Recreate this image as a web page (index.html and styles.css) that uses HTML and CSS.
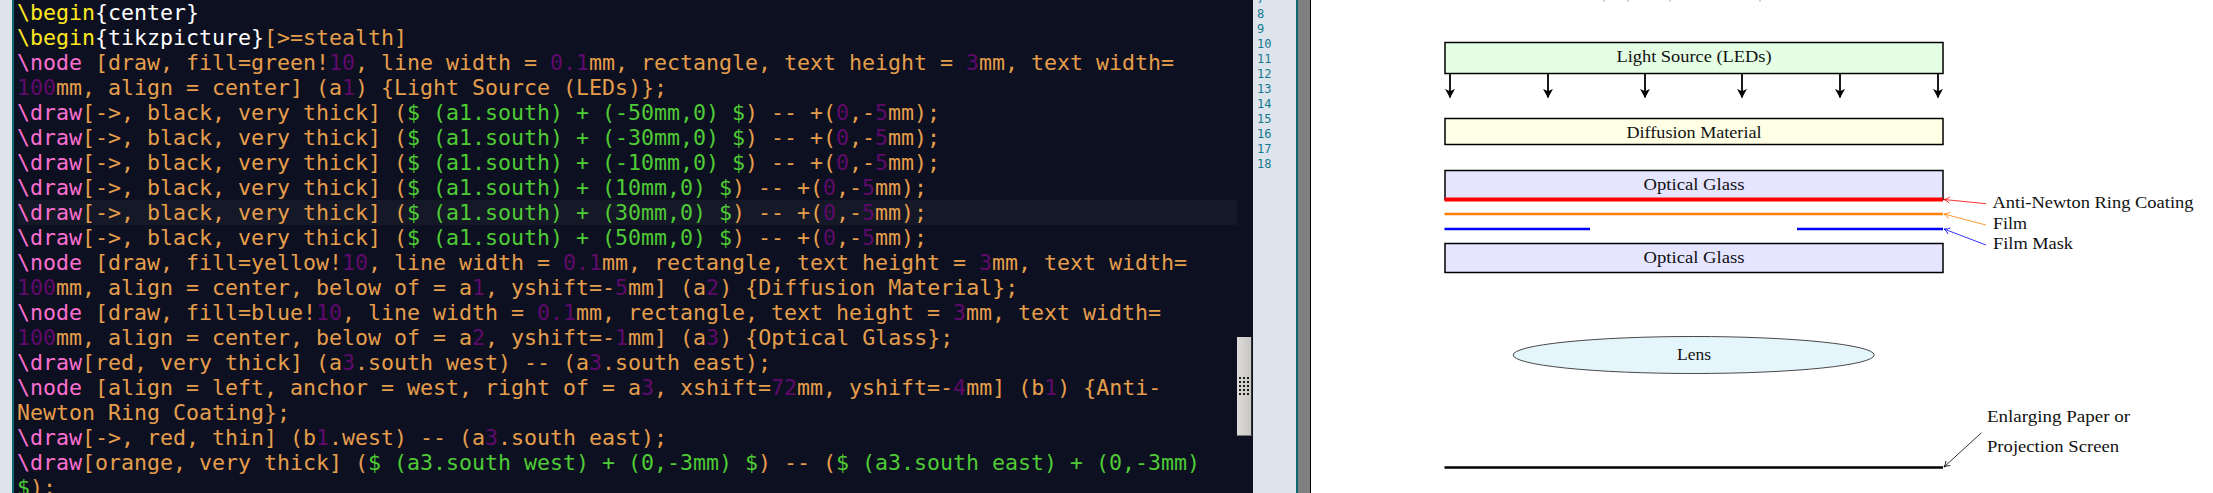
FILE: index.html
```html
<!DOCTYPE html>
<html lang="en">
<head>
<meta charset="utf-8">
<title>TikZ editor and preview</title>
<link rel="stylesheet" href="styles.css">
</head>
<body>
<div class="app">
  <div class="gutter"></div>
  <main class="editor">
    <div class="code">
      <div class="line"><span class="y">\begin</span><span class="w">{center}</span></div>
      <div class="line"><span class="y">\begin</span><span class="w">{tikzpicture}</span>[&gt;=stealth]</div>
      <div class="line"><span class="k">\node</span> [draw, fill=green!<span class="n">10</span>, line width = <span class="n">0.1</span>mm, rectangle, text height = <span class="n">3</span>mm, text width=</div>
      <div class="line"><span class="n">100</span>mm, align = center] (a<span class="n">1</span>) {Light Source (LEDs)};</div>
      <div class="line"><span class="k">\draw</span>[-&gt;, black, very thick] (<span class="g">$ (a1.south) + (-50mm,0) $</span>) -- +(<span class="n">0</span>,-<span class="n">5</span>mm);</div>
      <div class="line"><span class="k">\draw</span>[-&gt;, black, very thick] (<span class="g">$ (a1.south) + (-30mm,0) $</span>) -- +(<span class="n">0</span>,-<span class="n">5</span>mm);</div>
      <div class="line"><span class="k">\draw</span>[-&gt;, black, very thick] (<span class="g">$ (a1.south) + (-10mm,0) $</span>) -- +(<span class="n">0</span>,-<span class="n">5</span>mm);</div>
      <div class="line"><span class="k">\draw</span>[-&gt;, black, very thick] (<span class="g">$ (a1.south) + (10mm,0) $</span>) -- +(<span class="n">0</span>,-<span class="n">5</span>mm);</div>
      <div class="line current"><span class="k">\draw</span>[-&gt;, black, very thick] (<span class="g">$ (a1.south) + (30mm,0) $</span>) -- +(<span class="n">0</span>,-<span class="n">5</span>mm);</div>
      <div class="line"><span class="k">\draw</span>[-&gt;, black, very thick] (<span class="g">$ (a1.south) + (50mm,0) $</span>) -- +(<span class="n">0</span>,-<span class="n">5</span>mm);</div>
      <div class="line"><span class="k">\node</span> [draw, fill=yellow!<span class="n">10</span>, line width = <span class="n">0.1</span>mm, rectangle, text height = <span class="n">3</span>mm, text width=</div>
      <div class="line"><span class="n">100</span>mm, align = center, below of = a<span class="n">1</span>, yshift=-<span class="n">5</span>mm] (a<span class="n">2</span>) {Diffusion Material};</div>
      <div class="line"><span class="k">\node</span> [draw, fill=blue!<span class="n">10</span>, line width = <span class="n">0.1</span>mm, rectangle, text height = <span class="n">3</span>mm, text width=</div>
      <div class="line"><span class="n">100</span>mm, align = center, below of = a<span class="n">2</span>, yshift=-<span class="n">1</span>mm] (a<span class="n">3</span>) {Optical Glass};</div>
      <div class="line"><span class="k">\draw</span>[red, very thick] (a<span class="n">3</span>.south west) -- (a<span class="n">3</span>.south east);</div>
      <div class="line"><span class="k">\node</span> [align = left, anchor = west, right of = a<span class="n">3</span>, xshift=<span class="n">72</span>mm, yshift=-<span class="n">4</span>mm] (b<span class="n">1</span>) {Anti-</div>
      <div class="line">Newton Ring Coating};</div>
      <div class="line"><span class="k">\draw</span>[-&gt;, red, thin] (b<span class="n">1</span>.west) -- (a<span class="n">3</span>.south east);</div>
      <div class="line"><span class="k">\draw</span>[orange, very thick] (<span class="g">$ (a3.south west) + (0,-3mm) $</span>) -- (<span class="g">$ (a3.south east) + (0,-3mm)</span></div>
      <div class="line"><span class="g">$</span>);</div>
    </div>
    <div class="scrollbar">
      <div class="thumb">
        <div class="grip">
          <i></i><i></i><i></i><i></i><i></i><i></i><i></i><i></i><i></i><i></i><i></i><i></i><i></i><i></i><i></i>
        </div>
      </div>
    </div>
  </main>
  <aside class="numbers">
    <div>7</div><div>8</div><div>9</div><div>10</div><div>11</div><div>12</div><div>13</div><div>14</div><div>15</div><div>16</div><div>17</div><div>18</div>
  </aside>
  <div class="divider"></div>
  <section class="preview">
    <svg class="figure" width="902" height="493" viewBox="1311 0 902 493" xmlns="http://www.w3.org/2000/svg">
      <defs>
        <marker id="head" viewBox="0 0 10 10" refX="9.5" refY="5" markerWidth="9" markerHeight="11" markerUnits="userSpaceOnUse" orient="auto" preserveAspectRatio="none">
          <path class="head" d="M0 0.5 L10 5 L0 9.5 L2.6 5 Z"/>
        </marker>
        <marker id="red" viewBox="0 0 10 10" refX="9" refY="5" markerWidth="8" markerHeight="8" markerUnits="userSpaceOnUse" orient="auto">
          <path class="open red" d="M2 1 Q5 4 9 5 Q5 6 2 9"/>
        </marker>
        <marker id="orange" viewBox="0 0 10 10" refX="9" refY="5" markerWidth="8" markerHeight="8" markerUnits="userSpaceOnUse" orient="auto">
          <path class="open orange" d="M2 1 Q5 4 9 5 Q5 6 2 9"/>
        </marker>
        <marker id="blue" viewBox="0 0 10 10" refX="9" refY="5" markerWidth="8" markerHeight="8" markerUnits="userSpaceOnUse" orient="auto">
          <path class="open blue" d="M2 1 Q5 4 9 5 Q5 6 2 9"/>
        </marker>
        <marker id="black" viewBox="0 0 10 10" refX="9" refY="5" markerWidth="8" markerHeight="8" markerUnits="userSpaceOnUse" orient="auto">
          <path class="open dark" d="M2 1 Q5 4 9 5 Q5 6 2 9"/>
        </marker>
      </defs>

      <path class="clip" d="M1604 0v1.5M1628 0v1.5M1670 0v1.5M1760 0v1.5"/>

      <rect class="box green" x="1445" y="42.5" width="498" height="31"/>
      <text class="label" x="1694" y="62" text-anchor="middle" textLength="155" lengthAdjust="spacingAndGlyphs">Light Source (LEDs)</text>

      <path class="drop" marker-end="url(#head)" d="M1450 74V97.500"/>
      <path class="drop" marker-end="url(#head)" d="M1548 74V97.500"/>
      <path class="drop" marker-end="url(#head)" d="M1645 74V97.500"/>
      <path class="drop" marker-end="url(#head)" d="M1742 74V97.500"/>
      <path class="drop" marker-end="url(#head)" d="M1840 74V97.500"/>
      <path class="drop" marker-end="url(#head)" d="M1938 74V97.500"/>

      <rect class="box yellow" x="1445" y="118.5" width="498" height="26"/>
      <text class="label" x="1694" y="138" text-anchor="middle" textLength="135" lengthAdjust="spacingAndGlyphs">Diffusion Material</text>

      <rect class="box blue-fill" x="1445" y="170.5" width="498" height="29"/>
      <text class="label" x="1694" y="190" text-anchor="middle" textLength="101" lengthAdjust="spacingAndGlyphs">Optical Glass</text>

      <path class="bar red" d="M1444.500 199.500H1943"/>
      <path class="bar-thin orange" d="M1444.500 214H1943"/>
      <path class="bar-thin blue" d="M1444.500 229H1590M1797 229H1943"/>

      <rect class="box blue-fill" x="1445" y="243.500" width="498" height="29"/>
      <text class="label" x="1694" y="263" text-anchor="middle" textLength="101" lengthAdjust="spacingAndGlyphs">Optical Glass</text>

      <path class="lead red" marker-end="url(#red)" d="M1986 203.700L1944 199.500"/>
      <path class="lead orange" marker-end="url(#orange)" d="M1986 225L1944 214"/>
      <path class="lead blue" marker-end="url(#blue)" d="M1986 245L1944 229"/>
      <text class="label" x="1992.500" y="208" textLength="201" lengthAdjust="spacingAndGlyphs">Anti-Newton Ring Coating</text>
      <text class="label" x="1993" y="229" textLength="34" lengthAdjust="spacingAndGlyphs">Film</text>
      <text class="label" x="1993" y="249" textLength="80" lengthAdjust="spacingAndGlyphs">Film Mask</text>

      <ellipse class="lens" cx="1693.700" cy="355" rx="180.500" ry="18.500"/>
      <text class="label" x="1694" y="360" text-anchor="middle" textLength="34" lengthAdjust="spacingAndGlyphs">Lens</text>

      <path class="screen" d="M1444.500 467.500H1943"/>
      <path class="lead dark" marker-end="url(#black)" d="M1981.500 432.700L1944 467"/>
      <text class="label" x="1987" y="422" textLength="143" lengthAdjust="spacingAndGlyphs">Enlarging Paper or</text>
      <text class="label" x="1987" y="452" textLength="132" lengthAdjust="spacingAndGlyphs">Projection Screen</text>
    </svg>
  </section>
</div>
</body>
</html>
```

FILE: styles.css
```css
* {
  box-sizing: border-box;
}

html,
body {
  margin: 0;
  padding: 0;
  height: 493px;
  overflow: hidden;
  background: #ffffff;
}

.app {
  display: flex;
  width: 2213px;
  height: 493px;
  overflow: hidden;
}

.gutter {
  flex: 0 0 12px;
  background: #dde4ec;
}

.editor {
  flex: 0 0 1241px;
  display: flex;
  background: #0d1021;
  border-left: 2px solid #0b6a70;
  overflow: hidden;
}

.code {
  flex: 1 1 auto;
  min-width: 0;
  padding-left: 3px;
  font-family: "DejaVu Sans Mono", monospace;
  font-size: 21.6px;
  line-height: 25px;
  color: #e59e4b;
}

.line {
  height: 25px;
  white-space: pre;
}

.current {
  background: #151826;
}

.y { color: #ffe81f; }
.w { color: #ffffff; }
.k { color: #fb6fd0; }
.n { color: #5f0a6b; }
.g { color: #4fcb35; }

.scrollbar {
  flex: 0 0 16px;
  padding: 337px 1px 0 0;
}

.thumb {
  display: flex;
  align-items: center;
  justify-content: center;
  width: 14.500px;
  height: 99px;
  background: linear-gradient(90deg, #dedcd8, #c8c6c2);
  border-right: 1px solid #333333;
  border-bottom: 1px solid #777777;
}

.grip {
  display: grid;
  grid-template-columns: repeat(3, 2px);
  grid-auto-rows: 2px;
  column-gap: 2px;
  row-gap: 2px;
}

.grip i {
  display: block;
  background: #1b1b1b;
}

.numbers {
  flex: 0 0 43px;
  margin-top: -8px;
  padding-left: 4px;
  background: #dde4ec;
  font-family: "DejaVu Sans Mono", monospace;
  font-size: 12px;
  line-height: 15px;
  color: #16798f;
}

.divider {
  flex: 0 0 15px;
  background: #808080;
  border-left: 2px solid #0b6a70;
  border-right: 1px solid #000000;
}

.preview {
  flex: 1 1 auto;
  background: #ffffff;
}

.figure {
  display: block;
}

.label {
  font-family: "Liberation Serif", serif;
  font-size: 16px;
  fill: #111111;
}

.box {
  stroke: #000000;
  stroke-width: 1.500;
}

.green { fill: #e5ffe5; }
.yellow { fill: #ffffe5; }
.blue-fill { fill: #e5e5ff; }

.clip {
  stroke: #999999;
  stroke-width: 1;
  fill: none;
}

.drop {
  stroke: #000000;
  stroke-width: 1.800;
  fill: none;
}

.head {
  fill: #000000;
}

.bar,
.bar-thin,
.lead,
.screen,
.open {
  fill: none;
}

.bar { stroke-width: 4; }
.bar-thin { stroke-width: 2.600; }
.lead { stroke-width: 0.800; }
.open { stroke-width: 1; }
.screen { stroke: #000000; stroke-width: 2.400; }

.bar.red,
.lead.red,
.open.red { stroke: #ff0000; }

.bar-thin.orange,
.lead.orange,
.open.orange { stroke: #ff8000; }

.bar-thin.blue,
.lead.blue,
.open.blue { stroke: #0000ff; }

.lead.dark,
.open.dark { stroke: #000000; }

.lens {
  fill: #e5f5fc;
  stroke: #333333;
  stroke-width: 0.900;
}
```
